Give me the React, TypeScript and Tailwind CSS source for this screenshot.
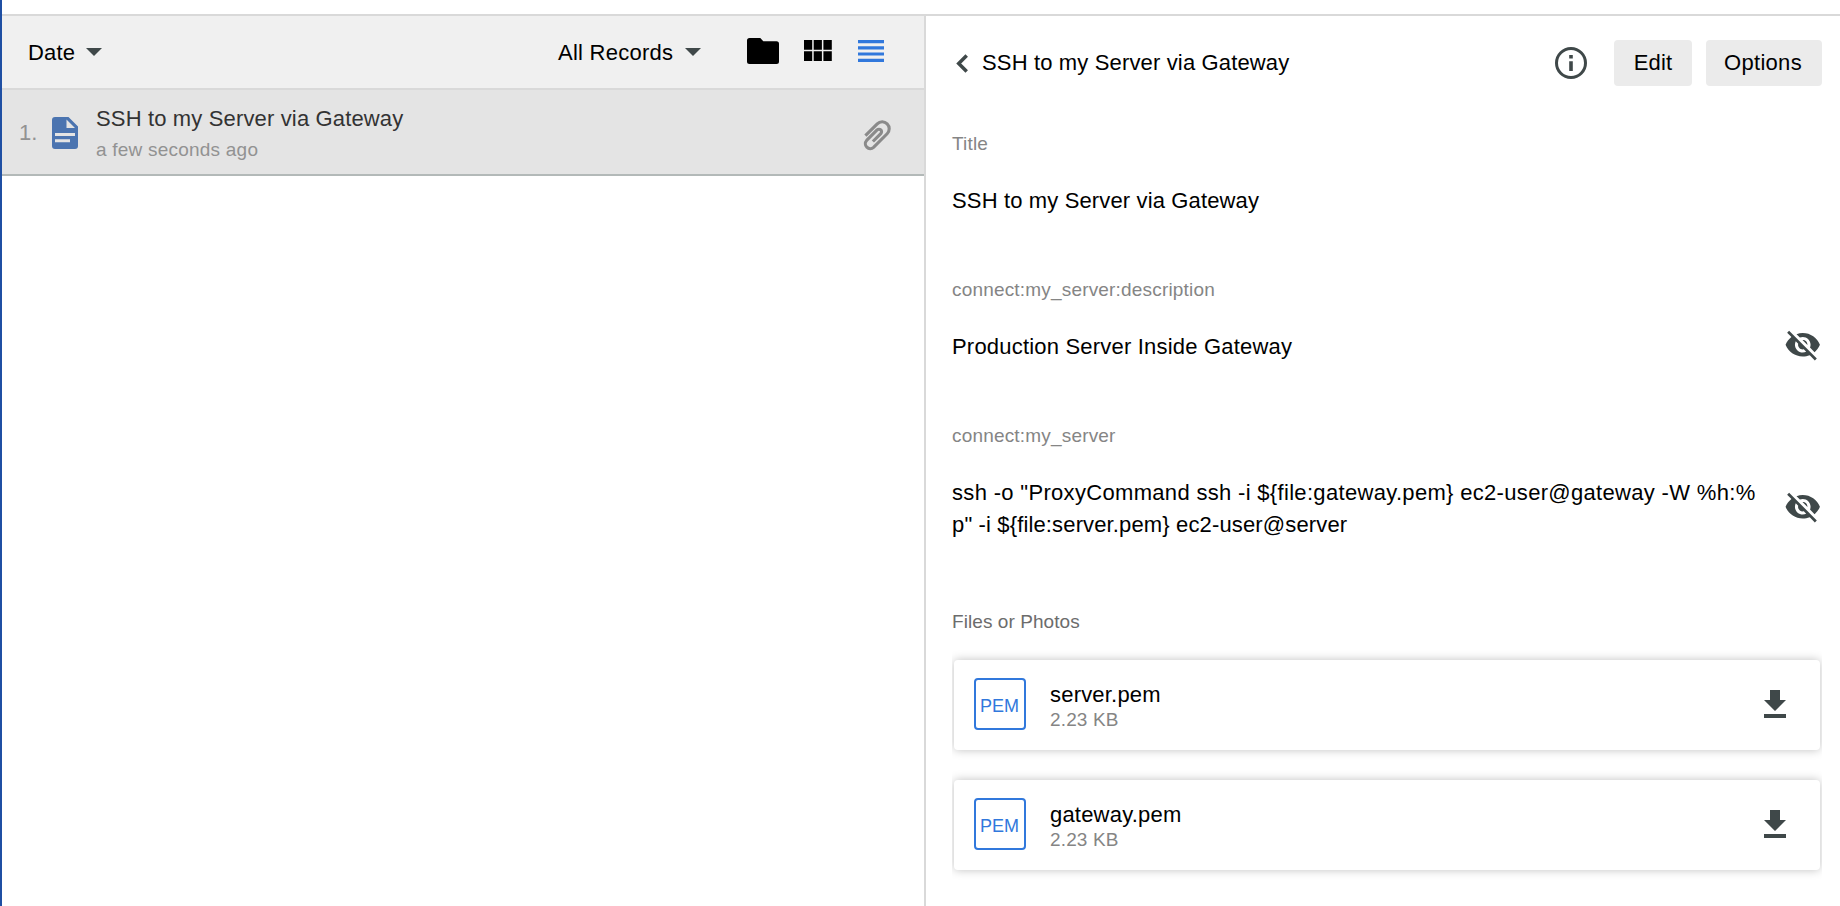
import type { ReactNode } from "react";

const MAIN = "text-[22px] text-black whitespace-nowrap";

function Caret() {
  return (
    <svg className="block h-2 w-4" viewBox="0 0 16 8">
      <path d="M0 0h16L8 8z" fill="#3f4849" />
    </svg>
  );
}

function EyeOff() {
  return (
    <svg className="-mb-px -mt-[5px] block h-[37.5px] w-[37.5px] shrink-0" viewBox="0 0 24 24" fill="#3f4849">
      <path d="M12 7c2.76 0 5 2.24 5 5 0 .65-.13 1.26-.36 1.83l2.92 2.92c1.51-1.26 2.7-2.89 3.43-4.75-1.73-4.39-6-7.5-11-7.5-1.4 0-2.74.25-3.98.7l2.16 2.16C10.74 7.13 11.35 7 12 7zM2 4.27l2.28 2.28.46.46C3.08 8.3 1.78 10.02 1 12c1.73 4.39 6 7.5 11 7.5 1.55 0 3.03-.3 4.38-.84l.42.42L19.73 22 21 20.73 3.27 3 2 4.27zM7.53 9.8l1.55 1.55c-.05.21-.08.43-.08.65 0 1.66 1.34 3 3 3 .22 0 .44-.03.65-.08l1.55 1.55c-.67.33-1.41.53-2.2.53-2.76 0-5-2.24-5-5 0-.79.2-1.53.53-2.2zm4.31-.78l3.15 3.15.02-.16c0-1.66-1.34-3-3-3l-.17.01z" />
    </svg>
  );
}

function Toolbar() {
  return (
    <div className="flex h-[74px] items-center border-b-2 border-[#d9d9d9] bg-[#f0f0f0] pl-[26px] pr-10">
      <span className={MAIN + " w-[58px] tracking-[0.15px]"}>Date</span>
      <Caret />
      <div className="flex-1" />
      <span className={MAIN + " w-[127px] tracking-[0.25px]"}>All Records</span>
      <Caret />
      <svg className="mb-0.5 ml-[46px] block h-[26px] w-8" viewBox="0 0 32 26">
        <path d="M2.500 0h10.800L16.300 3.200H29.500A2.500 2.500 0 0 1 32 5.700V23.500a2.500 2.500 0 0 1-2.500 2.500h-27A2.500 2.500 0 0 1 0 23.500V2.500A2.500 2.500 0 0 1 2.500 0z" />
      </svg>
      <svg className="mb-[3px] ml-[25px] block h-[21px] w-7" viewBox="0 0 28 21">
        <path d="M0 0h8.200v9.800H0zM9.700 0h8.200v9.800H9.700zM19.400 0h8.400v9.800h-8.400zM0 11.200h8.200V21H0zM9.700 11.200h8.200V21H9.700zM19.400 11.200h8.400V21h-8.400z" />
      </svg>
      <svg className="mb-0.5 ml-[26px] block h-[22px] w-[26px]" viewBox="0 0 26 22">
        <path d="M0 0h26v3.200H0zM0 6.200h26v3.200H0zM0 12.400h26v3.200H0zM0 18.800h26V22H0z" fill="#3178dc" />
      </svg>
    </div>
  );
}

function RecordRow() {
  return (
    <div className="flex h-[86px] items-center border-b-2 border-[#b3b9b8] bg-[#e4e4e4] pl-[17px] pr-8">
      <span className="w-[33px] text-[22px] text-[#929292]">1.</span>
      <svg className="mt-0.5 block h-8 w-[26px]" viewBox="0 0 26 32">
        <path fillRule="evenodd" d="M3 0h13.500L26 9.500V29a3 3 0 0 1-3 3H3a3 3 0 0 1-3-3V3a3 3 0 0 1 3-3zM14.500 2.500V11H23zM3 16v3h20v-3zM3 22.300v3h15v-3z" fill="#4b74b0" />
      </svg>
      <div className="flex flex-1 flex-col pl-[18px] pt-[3px]">
        <span className="whitespace-nowrap text-[22px] leading-[31px] tracking-[0.15px] text-[#333]">SSH to my Server via Gateway</span>
        <span className="whitespace-nowrap text-[19px] leading-[31px] tracking-[0.22px] text-[#929292]">a few seconds ago</span>
      </div>
      <svg className="mt-[6px] block h-8 w-[29px]" viewBox="0 0 29 32">
        <path
          d="M2.400 16.700L14.250 4.850A7 7 0 0 1 24.150 14.750L10.560 28.360A4.900 4.900 0 0 1 3.640 21.440L14.110 10.960A2.600 2.600 0 0 1 17.790 14.640L9.900 22.500"
          fill="none"
          stroke="#8a8a8a"
          strokeWidth="3.100"
        />
      </svg>
    </div>
  );
}

function Field({ label, action, children }: { label: string; action?: boolean; children: ReactNode }) {
  return (
    <div className="mb-[58px]">
      <div className="text-[19px] leading-[26px] tracking-[0.18px] text-[#858585]">{label}</div>
      <div className="mt-[26px] flex items-center justify-between pr-[3px]">
        <div className="py-0.5 text-[22px] leading-8 tracking-[0.14px] text-black">{children}</div>
        {action && <EyeOff />}
      </div>
    </div>
  );
}

function FileCard({ name }: { name: string }) {
  return (
    <div className="flex h-[90px] items-center rounded-[4px] bg-white pl-5 pr-[34px] shadow-[0_0_10px_rgba(0,0,0,0.25)]">
      <div className="mb-0.5 flex h-[52px] w-[52px] items-center justify-center rounded-[4px] border-2 border-[#3178dc] pr-px pt-[5px] text-[18px] text-[#3178dc]">PEM</div>
      <div className="flex flex-1 flex-col pl-6 pt-1">
        <span className="text-[22px] leading-[25px] tracking-[0.2px] text-black">{name}</span>
        <span className="text-[19px] leading-[25px] tracking-[0.15px] text-[#858585]">2.23 KB</span>
      </div>
      <svg className="mb-0.5 block h-7 w-[22px]" viewBox="0 0 22 28" fill="#3f4849">
        <path d="M6 0h10v10h6L11 21 0 10h6zM0 24h22v4H0z" />
      </svg>
    </div>
  );
}

export default function App() {
  return (
    <div className="flex h-[906px] w-[1840px] overflow-hidden bg-white font-['Liberation_Sans',Arial,sans-serif]">
      <div className="w-[2px] shrink-0 bg-[#1f4fa3]" />
      <div className="flex min-w-0 flex-1 flex-col pt-[14px]">
        <div className="flex flex-1 border-t-2 border-[#d9d9d9]">
          <section className="w-[922px] shrink-0">
            <Toolbar />
            <RecordRow />
          </section>
          <section className="min-w-0 flex-1 border-l-2 border-[#d9d9d9] pl-[26px] pr-4">
            <header className="flex h-[94px] items-center pl-1 pr-[2px]">
              <svg className="block h-[19px] w-3" viewBox="0 0 12 19">
                <path d="M10.700 1.400L2.700 9.500l8 8.100" fill="none" stroke="#3f4849" strokeWidth="3.500" />
              </svg>
              <span className={MAIN + " mb-0.5 flex-1 pl-[14px] tracking-[0.15px]"}>SSH to my Server via Gateway</span>
              <svg className="mr-[27px] block h-8 w-8" viewBox="0 0 32 32">
                <circle cx="16" cy="16" r="14.500" fill="none" stroke="#3f4849" strokeWidth="3" />
                <path d="M14.200 8h3.600v3.400h-3.600zM14.200 14.300h3.600V24h-3.600z" fill="#3f4849" />
              </svg>
              <button className="mr-[14px] h-[46px] w-[78px] rounded-[4px] bg-[#ebebeb] pb-0.5 text-[22px] tracking-[0.15px] text-black">Edit</button>
              <button className="h-[46px] w-[116px] rounded-[4px] bg-[#ebebeb] pb-0.5 pr-0.5 text-[22px] tracking-[0.3px] text-black">Options</button>
            </header>
            <main className="pt-[21px]">
              <Field label="Title">SSH to my Server via Gateway</Field>
              <Field label="connect:my_server:description" action>
                <span className="tracking-[0.2px]">Production Server Inside Gateway</span>
              </Field>
              <Field label="connect:my_server" action>
                <span className="whitespace-nowrap tracking-[0.32px]">{'ssh -o "ProxyCommand ssh -i ${file:gateway.pem} ec2-user@gateway -W %h:%'}</span>
                <br />
                {'p" -i ${file:server.pem} ec2-user@server'}
              </Field>
              <div className="pt-2 text-[19px] leading-[26px] tracking-[0.07px] text-[#6c6c6c]">Files or Photos</div>
              <div className="mr-0.5 mt-[10px] flex flex-col gap-[30px] overflow-hidden px-0.5 py-[15px]">
                <FileCard name="server.pem" />
                <FileCard name="gateway.pem" />
              </div>
            </main>
          </section>
        </div>
      </div>
    </div>
  );
}
